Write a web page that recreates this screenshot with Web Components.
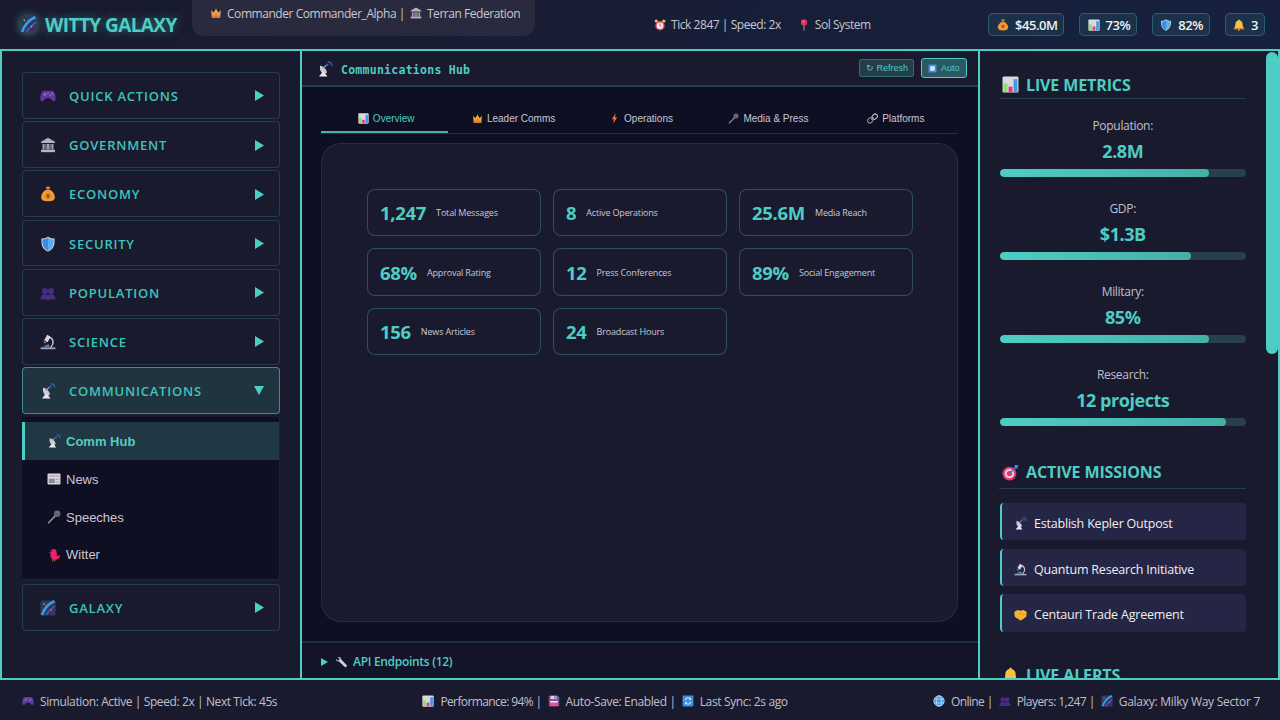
<!DOCTYPE html>
<html lang="en"><head><meta charset="utf-8"><title>Witty Galaxy</title>
<style>
html,body{margin:0;height:100%;background:#1a1a2e;overflow:hidden}
body{font-family:"Open Sans","Liberation Sans",sans-serif;color:#e0e0e0}
</style></head><body>
<wg-app></wg-app>
<script>
const ICONS={
galaxy:`<defs><linearGradient id="g1" x1="0" y1="0" x2="1" y2="1"><stop offset="0" stop-color="#2a3a4e"/><stop offset="1" stop-color="#4b2a68"/></linearGradient></defs><rect x="0.5" y="0.5" width="15" height="15" rx="1.5" fill="url(#g1)"/><path d="M2 15C4 9 8 4 14.500 1" stroke="#2f9fe6" stroke-width="2.600" fill="none"/><path d="M6 15C9 10 12 8 15 6" stroke="#2a6fb8" stroke-width="1.400" fill="none"/><circle cx="4" cy="4" r=".7" fill="#ffd86b"/><circle cx="11" cy="10" r=".6" fill="#ffd86b"/>`,
crown:`<path d="M1.500 4l3.500 3.500L8 2l3 5.500L14.500 4 13.500 14h-11z" fill="#f5a63c"/><path d="M2.500 11.500h11V14.500h-11z" fill="#e07a3a"/><circle cx="8" cy="9.800" r="1.200" fill="#e8506a"/><circle cx="5" cy="10.500" r=".9" fill="#6aa8e8"/><circle cx="11" cy="10.500" r=".9" fill="#6aa8e8"/>`,
bank:`<path d="M8 .8l7 4V6H1V4.800z" fill="#b4afbb"/><path d="M2.500 7h2.200v5.500H2.500zM6.900 7h2.200v5.500H6.900zM11.300 7h2.200v5.500h-2.200z" fill="#a29dab"/><path d="M4.700 7h2.200v5.500H4.700zM9.100 7h2.200v5.500H9.100z" fill="#6d6a78"/><path d="M1 12.700h14V15.200H1z" fill="#b9b4c0"/>`,
alarm:`<circle cx="8" cy="9" r="6.300" fill="#f0415f"/><circle cx="8" cy="9" r="4.400" fill="#f4eef0"/><path d="M8 6v3l2 1" stroke="#555" stroke-width="1" fill="none"/><circle cx="3" cy="2.800" r="2.300" fill="#f5b13c"/><circle cx="13" cy="2.800" r="2.300" fill="#f5b13c"/>`,
pin:`<path d="M8 8v7.500" stroke="#a7a3ad" stroke-width="1.300"/><circle cx="8" cy="4.600" r="4.200" fill="#ea2f62"/><circle cx="6.800" cy="3.400" r="1" fill="#f78ba8"/>`,
money:`<path d="M5.800 .8h4.400l-1 2.800H6.800z" fill="#e8913a"/><path d="M6.400 3.600h3.200C13 5.500 15 8.500 14.800 11.400 14.600 14 12.500 15.200 8 15.200S1.400 14 1.200 11.400C1 8.500 3 5.500 6.400 3.600z" fill="#f49a35"/><rect x="6" y="3" width="4" height="1.100" fill="#7a4a20"/><circle cx="8" cy="10" r="2.800" fill="#d97a25"/><path d="M9 8.700H7.500v1.300h1v1.300H7" stroke="#6a3c12" stroke-width=".8" fill="none"/>`,
chart:`<rect x="0.500" y="0.500" width="15" height="15" rx="1.200" fill="#dcd8de"/><path d="M1.500 7h3.600v8H1.500z" fill="#8be06a"/><path d="M6.200 10h3.600v5H6.200z" fill="#f0307a"/><path d="M10.900 3h3.600v12h-3.600z" fill="#3f9ae8"/>`,
shield:`<path d="M8 .4c2 1.400 4 2 6.600 2 .4 6.400-1 10.900-6.600 13.200C2.400 13.300 1 8.800 1.400 2.400 4 2.400 6 1.800 8 .4z" fill="#c7cfdc"/><path d="M8 1.800c1.800 1.100 3.800 1.700 5.600 1.800.2 5.200-1 9-5.600 11.100z" fill="#57aef5"/><path d="M8 1.800C6.200 2.900 4.200 3.500 2.400 3.600c-.2 5.200 1 9 5.600 11.100z" fill="#3f8ae6"/>`,
bell:`<path d="M8 .8c.7 0 1.200.5 1.200 1.100 2.500.6 3.700 2.700 3.700 5.400 0 2.600.8 4 2.100 5.200H1c1.300-1.200 2.100-2.600 2.100-5.200 0-2.700 1.200-4.800 3.700-5.400C6.800 1.300 7.300.8 8 .8z" fill="#fbbf3f"/><path d="M1 12.500h14v1.300H1z" fill="#e8892e"/><circle cx="8" cy="14.300" r="1.500" fill="#e8892e"/>`,
gamepad:`<path d="M4.500 2.800h7c2.300 0 3.200 1.600 3.800 4.500.6 3.100.6 5.700-1.100 6-1.700.3-2.700-2.100-4-3.100H5.800c-1.300 1-2.300 3.400-4 3.100-1.700-.3-1.700-2.900-1.100-6 .6-2.900 1.500-4.500 3.800-4.500z" fill="#5e3a9c"/><path d="M3.300 6.500h3.200M4.900 4.900v3.200" stroke="#8f78c8" stroke-width="1"/><circle cx="10.400" cy="7.500" r=".8" fill="#e86a8a"/><circle cx="12.300" cy="5.800" r=".8" fill="#6ac0e8"/><circle cx="8" cy="5" r=".6" fill="#b9a8e0"/>`,
people:`<g fill="#4b2a85"><circle cx="5" cy="6" r="3.100"/><circle cx="11" cy="6" r="3.100"/><path d="M.5 14.500c0-3.300 1.800-5.200 4.500-5.200S9.500 11.200 9.500 14.500z"/><path d="M6.500 14.500c0-3.300 1.800-5.200 4.500-5.200s4.500 1.900 4.500 5.200z"/></g>`,
microscope:`<path d="M.6 13.400h14.800v1.800H.6z" fill="#a9a4b3"/><path d="M2.500 12.800l6-2.600 1.400 2.600z" fill="#3c9ce8"/><path d="M9.500 2.600c2.600.5 4.300 2.800 4.300 5.500 0 2-.9 3.800-2.400 5.300H9.600c1.700-1.400 2.700-3.300 2.700-5.300 0-1.800-1.100-3.200-2.800-3.800z" fill="#c5c0ca"/><path d="M7.200 .8l3.400 2-3 5.400-3.400-2z" fill="#d8d3dc"/><path d="M4 7l2.200 1.200-.8 1.300L3.300 8.300z" fill="#8a8594"/>`,
satellite:`<path d="M3.200 4.800c3.200.2 6.600 3.800 6.700 7-2.600 1.200-5.200.5-6.200-1.500-.9-1.800-.9-3.800-.5-5.500z" fill="#cfcad6"/><path d="M5.600 11L2 15.500h8.400L7.600 11.500z" fill="#ebe7ef"/><path d="M5.500 7.500l4-3.200" stroke="#a9a4b3" stroke-width="1.100"/><path d="M10.800 .8c2 .1 3.800 1.900 4 4" stroke="#2a5fb8" stroke-width="1.500" fill="none"/><circle cx="10.300" cy="3.800" r="1.300" fill="#2a5fb8"/>`,
news:`<rect x=".6" y="1.800" width="14.800" height="12.400" rx="1" fill="#dcd8e0"/><rect x="2" y="3.500" width="12" height="2" fill="#b9b4c0"/><rect x="2" y="7.500" width="7" height="5.200" fill="#8f8a98"/><rect x="10" y="7.500" width="4" height="1.500" fill="#aaa5b2"/><rect x="10" y="10.800" width="4" height="1.500" fill="#aaa5b2"/>`,
mic:`<path d="M.8 14.700l8.200-8.700 1.200 1.200-8.500 8.400z" fill="#a8a2b2"/><circle cx="11.600" cy="4.400" r="3.700" fill="#6e6878"/><path d="M9 2.500l4.500 4.500" stroke="#4a4552" stroke-width=".8"/>`,
bird:`<path d="M4 5c0-2.500 1.600-4 3.500-4s3.300 1.400 3.500 3.500l.3 4.500c1.300.3 2.500-.2 3.700-1.300-.1 3.800-2.400 5.800-6 5.800-3.500 0-5-2.500-5-5.300V6L1 5.400z" fill="#e8246a"/><path d="M6.500 13v2.200M9 13v2.200" stroke="#d8812a" stroke-width="1"/><circle cx="6" cy="4" r=".7" fill="#3a1020"/>`,
wrench:`<path d="M2.500 1.500l2.300 2.300-.8 1.700-1.800.6L0 3.900C-.2 6 1.500 7.500 3.600 7.100l9 8.300 2.300-2.300-8.400-9C6.900 2 4.800.7 2.500 1.500z" fill="#d4d0d8"/>`,
link:`<path d="M6.500 9.500L9.500 6.500" stroke="#c9c5cf" stroke-width="1.500"/><rect x="8" y="1.300" width="6.500" height="8" rx="3" transform="rotate(45 11.200 5.300)" fill="none" stroke="#c9c5cf" stroke-width="1.500"/><rect x="1.500" y="6.700" width="6.500" height="8" rx="3" transform="rotate(45 4.800 10.700)" fill="none" stroke="#9a95a3" stroke-width="1.500"/>`,
bolt:`<path d="M9.800 .3L4.200 9h3.300l-1.700 6.700L11.800 6.500H8.600z" fill="#f5793a"/>`,
target:`<circle cx="7" cy="9" r="6.500" fill="#e8336c"/><circle cx="7" cy="9" r="4.500" fill="#f6c6d6"/><circle cx="7" cy="9" r="2.500" fill="#e8336c"/><path d="M7 9l6-6" stroke="#2f7fd8" stroke-width="1.300"/><path d="M12 1l3.500 0-1.200 3.500-2.800-.5z" fill="#2f8fe0"/>`,
hands:`<path d="M.4 4.600L4.500 2.400l3.500 1 3.500-1 4.100 2.200-.5 6.200L9 15c-1 .5-1.800.2-2.400-.4L.9 10.800z" fill="#f8b532"/><path d="M5.500 7.500l3-1.500 4.500 4M6.500 12l-1.500-1.500M8.500 13l-1.500-1.500" stroke="#d9831f" stroke-width=".8" fill="none"/>`,
globe:`<circle cx="8" cy="8" r="7" fill="#3f9ae8"/><g stroke="#cfe6fb" stroke-width=".9" fill="none"><circle cx="8" cy="8" r="7"/><ellipse cx="8" cy="8" rx="3.300" ry="7"/><path d="M1.500 5.500h13M1.500 10.500h13"/></g>`,
floppy:`<path d="M1 1h12l2 2v12H1z" fill="#7a4f9e"/><rect x="3.500" y="1" width="8" height="4.500" fill="#d9d4e0"/><rect x="8.500" y="1.800" width="1.700" height="3" fill="#6a4590"/><rect x="3" y="8" width="10" height="7" fill="#ef4d8b"/><rect x="3" y="8" width="10" height="2" fill="#f3e9f0"/>`,
sync:`<rect x=".8" y=".8" width="14.400" height="14.400" rx="1.500" fill="#3f8fe6"/><path d="M4 7a4 4 0 0 1 7-1.800M12 9a4 4 0 0 1-7 1.800" stroke="#e6f2ff" stroke-width="1.300" fill="none"/><path d="M11.800 3.200v3h-3zM4.200 12.800v-3h3z" fill="#e6f2ff"/>`,
stop:`<rect x="1" y="1" width="14" height="14" rx="1" fill="#3f8fe6"/><rect x="4" y="4" width="8" height="8" fill="#d8e8fb"/>`
};
let uid=0;
function def(name,css,render){
  customElements.define(name,class extends HTMLElement{
    connectedCallback(){
      if(this.shadowRoot)return;
      const r=this.attachShadow({mode:"open"});
      r.innerHTML=`<style>${css}</style>`+render(this);
    }
  });
}
const A=(e,n)=>e.getAttribute(n)||"";
def("wg-icon",`:host{display:inline-flex;width:var(--s,14px);height:var(--s,14px);flex:none;vertical-align:-2px}svg{width:100%;height:100%;display:block}`,
  e=>{const id="i"+(++uid);return `<svg viewBox="0 0 16 16" aria-hidden="true">${ICONS[A(e,"name")].replace(/g1/g,id)}</svg>`});
def("wg-caret",`:host{display:inline-flex;flex:none}svg{display:block}`,
  e=>e.hasAttribute("open")?`<svg width="10" height="9" viewBox="0 0 10 8" preserveAspectRatio="none"><path d="M0 0h10L5 8z" fill="#4ecdc4"/></svg>`:`<svg width="${A(e,"w")||9}" height="${A(e,"h")||11}" viewBox="0 0 9 10" preserveAspectRatio="none"><path d="M0 0l9 5-9 5z" fill="#4ecdc4"/></svg>`);

def("wg-pill",`:host{display:flex;align-items:center;gap:6px;height:23px;box-sizing:border-box;padding:0 5.500px 0 7.500px;background:rgba(78,205,196,.1);border:1px solid rgba(78,205,196,.3);border-radius:5px;font:600 13px "Open Sans",sans-serif;letter-spacing:-.45px;color:#f0f0f0;--s:12px}`,
  e=>`<wg-icon name="${A(e,"icon")}"></wg-icon><slot></slot>`);

def("wg-header",`
:host{display:flex;align-items:center;height:49px;flex:none;background:linear-gradient(135deg,#1a1a2e,#16213e);padding:0 15.500px 0 20px;position:relative;box-sizing:border-box}
.logo{display:flex;align-items:center;gap:8px;width:172px;flex:none;font:700 19px "Open Sans",sans-serif;letter-spacing:-.58px;color:#4ecdc4;text-shadow:0 0 10px rgba(78,205,196,.5);--s:17px}
.logo wg-icon{filter:drop-shadow(0 0 4px rgba(78,205,196,.6))}
.user,.mid{font-size:12px;letter-spacing:-.45px;color:#c8c8d2;display:flex;gap:5px;align-items:center;--s:12px;white-space:nowrap}
.user{align-self:flex-start;width:343px;height:36px;box-sizing:border-box;background:#2a2a3e;border-radius:0 0 12px 12px;padding:0 0 10px 18px}
.mid{margin-left:119px}
.mid .p{margin-left:12px}
.stats{display:flex;gap:15px;margin-left:auto}
`,()=>`
<div class="logo"><wg-icon name="galaxy"></wg-icon><span>WITTY GALAXY</span></div>
<div class="user"><wg-icon name="crown"></wg-icon><span>Commander Commander_Alpha |</span><wg-icon name="bank"></wg-icon><span>Terran Federation</span></div>
<div class="mid"><wg-icon name="alarm"></wg-icon><span>Tick 2847 | Speed: 2x</span><wg-icon name="pin" class="p"></wg-icon><span>Sol System</span></div>
<div class="stats"><wg-pill icon="money">$45.0M</wg-pill><wg-pill icon="chart">73%</wg-pill><wg-pill icon="shield">82%</wg-pill><wg-pill icon="bell">3</wg-pill></div>`);

def("wg-nav-item",`
:host{display:flex;align-items:center;height:46.600px;box-sizing:border-box;background:#1a1a2e;border:1px solid rgba(78,205,196,.2);border-radius:4px;padding:1px 15px 0 17px;margin-bottom:2.650px;font:600 13px "Open Sans",sans-serif;letter-spacing:.78px;color:#3fc4bb;--s:16px;flex:none}
:host([open]){background:#203440;border-color:rgba(78,205,196,.6);padding-top:0}
span{flex:1;margin-left:13px}
`,e=>`<wg-icon name="${A(e,"icon")}"></wg-icon><span><slot></slot></span>${e.hasAttribute("open")?`<wg-caret open></wg-caret>`:`<wg-caret></wg-caret>`}`);

def("wg-sub",`
:host{display:flex;align-items:center;height:38px;box-sizing:border-box;padding-left:22px;border-left:3px solid transparent;font:13px "Liberation Sans",sans-serif;color:#c8c8d2;--s:14px;gap:5px}
:host([active]){background:#203844;border-left-color:#4ecdc4;color:#4ecdc4;font-weight:700}
`,e=>`<wg-icon name="${A(e,"icon")}"></wg-icon><slot></slot>`);

def("wg-sidebar",`
:host{display:flex;flex-direction:column;width:300px;box-sizing:border-box;flex:none;border-right:2px solid #4ecdc4;padding:21px 20px 0 20px;background:#1a1a2e;overflow:hidden}
.sub{background:#0f0f23;border:solid rgba(78,205,196,.12);border-width:0 1px 2px 0;border-radius:0 0 4px 4px;padding:5.400px 0 6px;margin-bottom:3px}
.sub wg-sub:last-child{height:37px}
`,()=>`
<wg-nav-item icon="gamepad">QUICK ACTIONS</wg-nav-item>
<wg-nav-item icon="bank">GOVERNMENT</wg-nav-item>
<wg-nav-item icon="money">ECONOMY</wg-nav-item>
<wg-nav-item icon="shield">SECURITY</wg-nav-item>
<wg-nav-item icon="people">POPULATION</wg-nav-item>
<wg-nav-item icon="microscope">SCIENCE</wg-nav-item>
<wg-nav-item icon="satellite" open>COMMUNICATIONS</wg-nav-item>
<div class="sub"><wg-sub icon="satellite" active>Comm Hub</wg-sub><wg-sub icon="news">News</wg-sub><wg-sub icon="mic">Speeches</wg-sub><wg-sub icon="bird">Witter</wg-sub></div>
<wg-nav-item icon="galaxy">GALAXY</wg-nav-item>`);

def("wg-stat",`
:host{display:flex;align-items:center;gap:10px;box-sizing:border-box;padding:0 12px;background:#1a1a2e;border:1px solid rgba(78,205,196,.3);border-radius:8px;min-width:0}
b{font:700 18.500px "Open Sans",sans-serif;letter-spacing:-.3px;color:#4ecdc4}
span{font:9px "Open Sans",sans-serif;letter-spacing:-.17px;color:#c8c8d2;white-space:nowrap}
`,e=>`<b>${A(e,"value")}</b><span><slot></slot></span>`);

def("wg-tab",`
:host{flex:1 1 0;min-width:0;display:flex;align-items:center;justify-content:center;gap:4px;height:28px;box-sizing:border-box;font:10px "Liberation Sans",sans-serif;color:#c8c8d2;--s:11px;border-bottom:2px solid transparent;padding-left:3px}
:host([active]){color:#4ecdc4;border-bottom-color:#45b0a8}
`,e=>`<wg-icon name="${A(e,"icon")}"></wg-icon><slot></slot>`);

def("wg-btn",`
:host{display:inline-flex;align-items:center;gap:4px;box-sizing:border-box;height:18px;padding:0 5.500px;font:9px "Liberation Sans",sans-serif;color:#4ecdc4;background:rgba(78,205,196,.2);border:1px solid rgba(78,205,196,.35);border-radius:3px;--s:9px}
:host([on]){background:rgba(78,205,196,.35);border-color:#4ecdc4;height:20px;color:#4ecdc4;padding:0 6px}
`,e=>`${A(e,"icon")?`<wg-icon name="${A(e,"icon")}"></wg-icon>`:""}<slot></slot>`);

def("wg-hub",`
:host{flex:1;display:flex;flex-direction:column;min-width:0;background:#0f0f23}
.head{display:flex;align-items:center;height:36px;flex:none;box-sizing:border-box;background:#1a1a2e;border-bottom:2px solid rgba(78,205,196,.2);padding:0 11.500px 0 15px;--s:16px}
.head b{flex:1;font:700 11.500px "DejaVu Sans Mono",monospace;letter-spacing:.26px;color:#4ecdc4;margin-left:8px;padding-top:3px}
.head wg-icon{margin-top:2px}
.btns{display:flex;gap:6.500px;align-items:center}
.body{flex:1;display:flex;flex-direction:column;padding:18px 20px 19px 19px;min-height:0}
.tabs{display:flex;border-bottom:1px solid rgba(78,205,196,.2);flex:none;margin-bottom:9px;height:28px}
.card{flex:1;box-sizing:border-box;background:#1a1a2e;border:1px solid rgba(255,255,255,.08);border-radius:20px;padding:45px;}
.grid{display:grid;grid-template-columns:repeat(3,174px);gap:12px;grid-auto-rows:47.400px}
.foot{flex:none;height:37px;box-sizing:border-box;border-top:2px solid rgba(78,205,196,.15);background:#13132a;display:flex;align-items:center;padding:2px 0 0 19px;gap:7px;font:600 12px "Open Sans",sans-serif;letter-spacing:-.3px;color:#4ecdc4;--s:12px}
.foot wg-icon{margin-left:1px;margin-right:-2px}
`,()=>`
<div class="head"><wg-icon name="satellite"></wg-icon><b>Communications Hub</b><div class="btns"><wg-btn>↻ Refresh</wg-btn><wg-btn icon="stop" on>Auto</wg-btn></div></div>
<div class="body">
<div class="tabs"><wg-tab icon="chart" active>Overview</wg-tab><wg-tab icon="crown">Leader Comms</wg-tab><wg-tab icon="bolt">Operations</wg-tab><wg-tab icon="mic">Media &amp; Press</wg-tab><wg-tab icon="link">Platforms</wg-tab></div>
<div class="card"><div class="grid">
<wg-stat value="1,247">Total Messages</wg-stat><wg-stat value="8">Active Operations</wg-stat><wg-stat value="25.6M">Media Reach</wg-stat>
<wg-stat value="68%">Approval Rating</wg-stat><wg-stat value="12">Press Conferences</wg-stat><wg-stat value="89%">Social Engagement</wg-stat>
<wg-stat value="156">News Articles</wg-stat><wg-stat value="24">Broadcast Hours</wg-stat>
</div></div></div>
<div class="foot"><wg-caret w="7" h="8"></wg-caret><wg-icon name="wrench"></wg-icon><span>API Endpoints (12)</span></div>`);

def("wg-title",`
:host{display:flex;align-items:center;gap:7px;box-sizing:border-box;margin:0 0 0 -1px;height:28px;padding-left:3px;border-bottom:1px solid rgba(78,205,196,.2);font:700 16px "Open Sans",sans-serif;letter-spacing:-.12px;color:#4ecdc4;--s:17px;white-space:nowrap;flex:none}
`,e=>`<wg-icon name="${A(e,"icon")}"></wg-icon><slot></slot>`);

def("wg-metric",`
:host{display:block;text-align:center;height:83px;font:12px "Open Sans",sans-serif;letter-spacing:-.3px;color:#c0c0cc}
.l{display:block;height:18px;line-height:18px}
.v{display:block;height:34px;font:700 18px/32px "Open Sans",sans-serif;letter-spacing:-.45px;color:#4ecdc4}
.t{display:block;height:8px;border-radius:4px;background:#26404c;overflow:hidden}
.f{display:block;height:100%;border-radius:4px;background:linear-gradient(90deg,#4ecdc4,#45b0a8)}
`,e=>`<span class="l">${A(e,"label")}</span><span class="v">${A(e,"value")}</span><span class="t"><span class="f" style="width:${A(e,"pct")}%"></span></span>`);

def("wg-mission",`
:host{display:flex;align-items:center;gap:7px;height:37.400px;box-sizing:border-box;padding:4px 0 0 12px;background:#252545;border-left:2px solid #4ecdc4;border-radius:4px;font:12.500px "Open Sans",sans-serif;letter-spacing:-.2px;color:#f0f0f0;--s:13px;margin-bottom:8.200px}
`,e=>`<wg-icon name="${A(e,"icon")}"></wg-icon><slot></slot>`);

def("wg-scrollbar",`
:host{display:block;flex:none;width:12px;background:#1a1a2e}
i{display:block;height:302px;margin-top:1px;border-radius:6px;background:#4ecdc4}
`,()=>`<i></i>`);

def("wg-side",`
:host{display:flex;flex:none;width:300px;box-sizing:border-box;border-left:2px solid #4ecdc4;background:#1a1a2e;overflow:hidden}
.scroll{flex:1;min-width:0;box-sizing:border-box;overflow:hidden;padding:20px 20.500px 0 20px}
.m{margin-top:18px}
.sec2{margin-top:9px;height:31px;padding-bottom:2px}
.sec3{margin-top:30px}
.ms{margin-top:14px}
`,()=>`<div class="scroll">
<wg-title icon="chart">LIVE METRICS</wg-title>
<div class="m"><wg-metric label="Population:" value="2.8M" pct="85"></wg-metric><wg-metric label="GDP:" value="$1.3B" pct="78"></wg-metric><wg-metric label="Military:" value="85%" pct="85"></wg-metric><wg-metric label="Research:" value="12 projects" pct="92"></wg-metric></div>
<wg-title icon="target" class="sec2">ACTIVE MISSIONS</wg-title>
<div class="ms"><wg-mission icon="satellite">Establish Kepler Outpost</wg-mission><wg-mission icon="microscope">Quantum Research Initiative</wg-mission><wg-mission icon="hands">Centauri Trade Agreement</wg-mission></div>
<wg-title icon="bell" class="sec3">LIVE ALERTS</wg-title>
</div><wg-scrollbar></wg-scrollbar>`);

def("wg-footer",`
:host{display:flex;justify-content:space-between;align-items:center;height:40px;flex:none;box-sizing:border-box;padding:2px 20px 0 22px;background:#1a1a2e;font-size:12px;letter-spacing:-.4px;color:#c0c0cc;--s:12px;white-space:nowrap}
div{display:flex;align-items:center;gap:6px}
.c{letter-spacing:-.36px}
.p{letter-spacing:-.62px}
.o{letter-spacing:-.6px}
.y{letter-spacing:-.55px}
.g{letter-spacing:-.27px}
`,()=>`
<div><wg-icon name="gamepad"></wg-icon><span>Simulation: Active | Speed: 2x | Next Tick: 45s</span></div>
<div class="c"><wg-icon name="chart"></wg-icon><span class="p">Performance: 94% |</span><wg-icon name="floppy"></wg-icon><span>Auto-Save: Enabled |</span><wg-icon name="sync"></wg-icon><span>Last Sync: 2s ago</span></div>
<div><wg-icon name="globe"></wg-icon><span class="o">Online |</span><wg-icon name="people"></wg-icon><span class="y">Players: 1,247 |</span><wg-icon name="galaxy"></wg-icon><span class="g">Galaxy: Milky Way Sector 7</span></div>`);

def("wg-app",`
:host{display:flex;flex-direction:column;height:720px;width:1280px;overflow:hidden}
main{flex:1;display:flex;min-height:0;border:solid #4ecdc4;border-width:2px}
`,()=>`<wg-header></wg-header><main><wg-sidebar></wg-sidebar><wg-hub></wg-hub><wg-side></wg-side></main><wg-footer></wg-footer>`);
</script></body></html>
